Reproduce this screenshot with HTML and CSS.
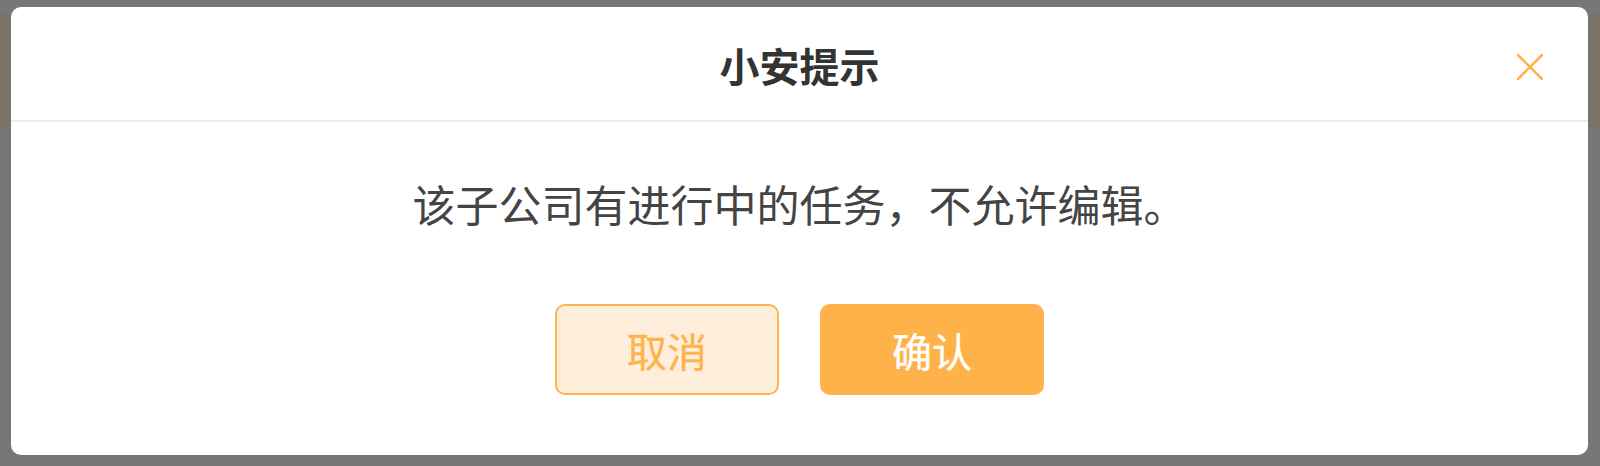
FILE: index.html
```html
<!DOCTYPE html>
<html lang="zh-CN">
<head>
    <meta charset="UTF-8">
    <meta name="viewport" content="width=device-width, initial-scale=1.0">
    <title>小安提示</title>
    <link rel="stylesheet" href="styles.css">
</head>
<body>
    <div class="backdrop">
        <div class="backdrop-bar"></div>
    </div>

    <div class="modal">
        <div class="modal-header">
            <h2 class="modal-title">小安提示</h2>
            <button class="modal-close" type="button" aria-label="关闭">
                <svg width="26" height="26" viewBox="0 0 26 26">
                    <path d="M1 1 L25 25 M25 1 L1 25" stroke="#ffb34a" stroke-width="2.6" stroke-linecap="round" fill="none"/>
                </svg>
            </button>
        </div>
        <div class="modal-body">
            <p class="modal-message">该子公司有进行中的任务，不允许编辑。</p>
            <div class="modal-actions">
                <button class="btn btn-cancel" type="button">取消</button>
                <button class="btn btn-confirm" type="button">确认</button>
            </div>
        </div>
    </div>
</body>
</html>
```

FILE: styles.css
```css
html, body {
    margin: 0;
    height: 100%;
}
body {
    font-family: "Noto Sans CJK SC", "Noto Sans", sans-serif;
    background-color: #777777;
    overflow: hidden;
}
.backdrop {
    padding-top: 14px;
}
.backdrop-bar {
    height: 114px;
    background-color: #7b7366;
}
.modal {
    position: absolute;
    left: 11px;
    top: 7px;
    width: 1577px;
    height: 448px;
    background: #fff;
    border-radius: 10px;
}
.modal-header {
    position: relative;
    height: 113px;
    border-bottom: 2px solid #ebebeb;
    display: flex;
    align-items: center;
    justify-content: center;
}
.modal-title {
    margin: 0;
    font-size: 40px;
    font-weight: bold;
    color: #333;
    line-height: 1;
    padding-top: 2px;
}
.modal-close {
    position: absolute;
    right: 45px;
    top: 47px;
    width: 26px;
    height: 26px;
    padding: 0;
    border: none;
    background: none;
    cursor: pointer;
}
.modal-close svg {
    display: block;
}
.modal-body {
    padding-top: 51px;
}
.modal-message {
    margin: 0;
    text-align: center;
    font-size: 43px;
    line-height: 60px;
    color: #444;
}
.modal-actions {
    display: flex;
    justify-content: center;
    gap: 41px;
    margin-top: 71px;
}
.btn {
    width: 224px;
    height: 91px;
    border-radius: 10px;
    font-family: inherit;
    font-size: 40px;
    font-weight: normal;
    -webkit-text-stroke: 0.3px currentColor;
    cursor: pointer;
}
.btn-cancel {
    background-color: #feeedb;
    border: 2px solid #ffb54d;
    color: #ffb34a;
}
.btn-confirm {
    background-color: #ffb24a;
    border: none;
    color: #fff;
}
```
